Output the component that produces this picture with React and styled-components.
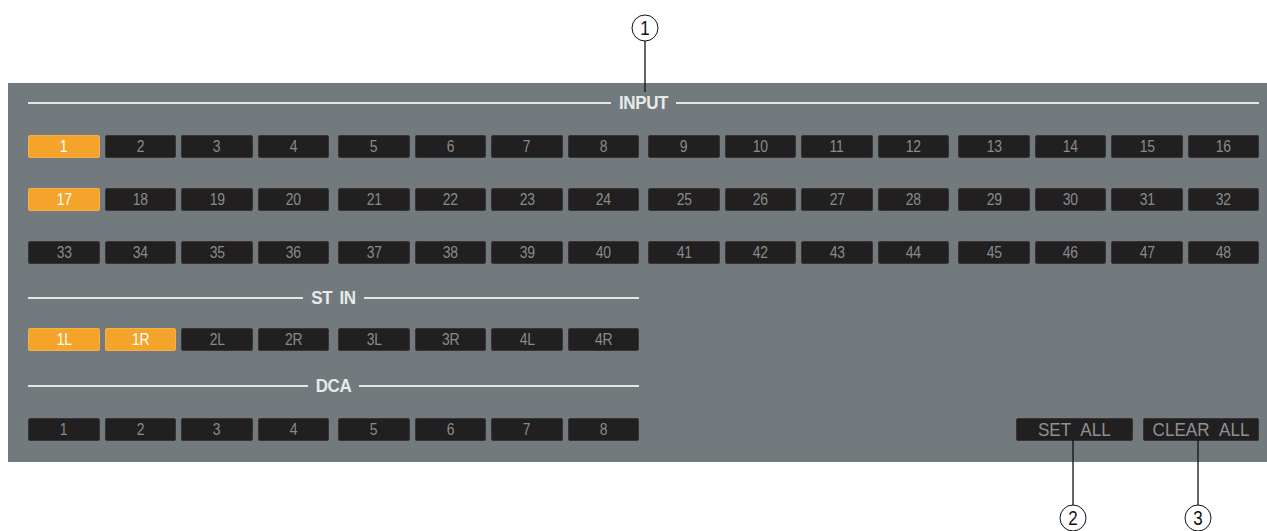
import React from 'react';
import styled, { createGlobalStyle } from 'styled-components';

const GlobalStyle = createGlobalStyle`
  body {
    margin: 0;
    background: #ffffff;
    font-family: "Liberation Sans", Arial, sans-serif;
  }
`;

const Page = styled.div`
  position: relative;
  width: 1267px;
  height: 531px;
  padding-top: 83px;
  box-sizing: border-box;
`;

const Panel = styled.section`
  margin-left: 8px;
  width: 1259px;
  box-sizing: border-box;
  background: #737a7d;
  padding: 10px 8px 21px 20px;
  display: flex;
  flex-direction: column;
`;

const Header = styled.div`
  display: flex;
  align-items: center;
  gap: 8px;
  height: 20px;
  width: ${(p) => (p.half ? '611px' : '100%')};
  margin-top: ${(p) => p.mt || 0}px;

  &::before,
  &::after {
    content: '';
    flex: 1;
    height: 2px;
    background: #e4e6e6;
  }
`;

const Label = styled.span`
  display: inline-block;
  transform: scaleY(1.12);
  font-weight: bold;
  font-size: 17px;
  letter-spacing: -0.4px;
  word-spacing: 3px;
  color: #e9eaea;
`;

const Rows = styled.div`
  display: flex;
  flex-direction: column;
  gap: 30px;
  margin-top: ${(p) => p.mt || 0}px;
`;

const Row = styled.div`
  display: flex;
  align-items: center;
  justify-content: space-between;
`;

const Groups = styled.div`
  display: grid;
  grid-template-columns: repeat(${(p) => p.count}, 301px);
  column-gap: 9px;
`;

const Group = styled.div`
  display: grid;
  grid-template-columns: repeat(4, 1fr);
  column-gap: 5px;
`;

const Key = styled.div`
  height: 23px;
  border-radius: 3px;
  background: ${(p) => (p.on ? '#f4a42b' : '#221f20')};
  box-shadow: inset 0 0 0 1px ${(p) => (p.on ? '#f6b04a' : '#363435')};
  color: ${(p) => (p.on ? '#ffffff' : '#868c8c')};
  font-size: 17px;
  display: flex;
  align-items: center;
  justify-content: center;
  overflow: hidden;
`;

const KeyText = styled.span`
  display: inline-block;
  transform: scaleX(0.82);
  letter-spacing: -0.3px;
  line-height: 1;
`;

const Actions = styled.div`
  display: flex;
  gap: 10px;
  padding-top: 1px;
`;

const ActionKey = styled(Key)`
  width: ${(p) => p.w}px;
  font-size: 18px;
  color: #8d9292;
`;

const ActionText = styled.span`
  display: inline-block;
  transform: scaleX(0.95);
  word-spacing: 6px;
  line-height: 1;
`;

const Callouts = styled.svg`
  position: absolute;
  left: 0;
  top: 0;
  pointer-events: none;
`;

const chunk = (list) => {
  const out = [];
  for (let i = 0; i < list.length; i += 4) out.push(list.slice(i, i + 4));
  return out;
};

const KeyGroups = ({ items, active = [] }) => (
  <Groups count={items.length / 4}>
    {chunk(items).map((g, gi) => (
      <Group key={gi}>
        {g.map((label) => (
          <Key key={label} on={active.includes(label)}>
            <KeyText>{label}</KeyText>
          </Key>
        ))}
      </Group>
    ))}
  </Groups>
);

const range = (from, to) =>
  Array.from({ length: to - from + 1 }, (_, i) => String(from + i));

const stIn = ['1L', '1R', '2L', '2R', '3L', '3R', '4L', '4R'];

const Callout = ({ cx, cy, n, y1, y2 }) => (
  <g>
    <line x1={cx} y1={y1} x2={cx} y2={y2} stroke="#111" strokeWidth="1.3" />
    <circle cx={cx} cy={cy} r="13" fill="#fff" stroke="#111" strokeWidth="1" />
    <text
      x={cx}
      y={cy + 7}
      textAnchor="middle"
      fontSize="20"
      fontFamily="Liberation Sans, Arial, sans-serif"
      fill="#111"
      transform={`translate(${cx} 0) scale(0.85 1) translate(${-cx} 0)`}
    >
      {n}
    </text>
  </g>
);

export default function App() {
  return (
    <Page>
      <GlobalStyle />
      <Panel>
        <Header>
          <Label>INPUT</Label>
        </Header>
        <Rows mt={22}>
          <Row>
            <KeyGroups items={range(1, 16)} active={['1']} />
          </Row>
          <Row>
            <KeyGroups items={range(17, 32)} active={['17']} />
          </Row>
          <Row>
            <KeyGroups items={range(33, 48)} />
          </Row>
        </Rows>
        <Header half mt={24}>
          <Label>ST IN</Label>
        </Header>
        <Rows mt={20}>
          <Row>
            <KeyGroups items={stIn} active={['1L', '1R']} />
          </Row>
        </Rows>
        <Header half mt={25}>
          <Label>DCA</Label>
        </Header>
        <Rows mt={21}>
          <Row>
            <KeyGroups items={range(1, 8)} />
            <Actions>
              <ActionKey w={117}>
                <ActionText>SET ALL</ActionText>
              </ActionKey>
              <ActionKey w={116}>
                <ActionText>CLEAR ALL</ActionText>
              </ActionKey>
            </Actions>
          </Row>
        </Rows>
      </Panel>
      <Callouts width="1267" height="531" viewBox="0 0 1267 531">
        <Callout cx={645} cy={28} n="1" y1={41} y2={92} />
        <Callout cx={1073} cy={518} n="2" y1={440} y2={505} />
        <Callout cx={1198} cy={518} n="3" y1={440} y2={505} />
      </Callouts>
    </Page>
  );
}
